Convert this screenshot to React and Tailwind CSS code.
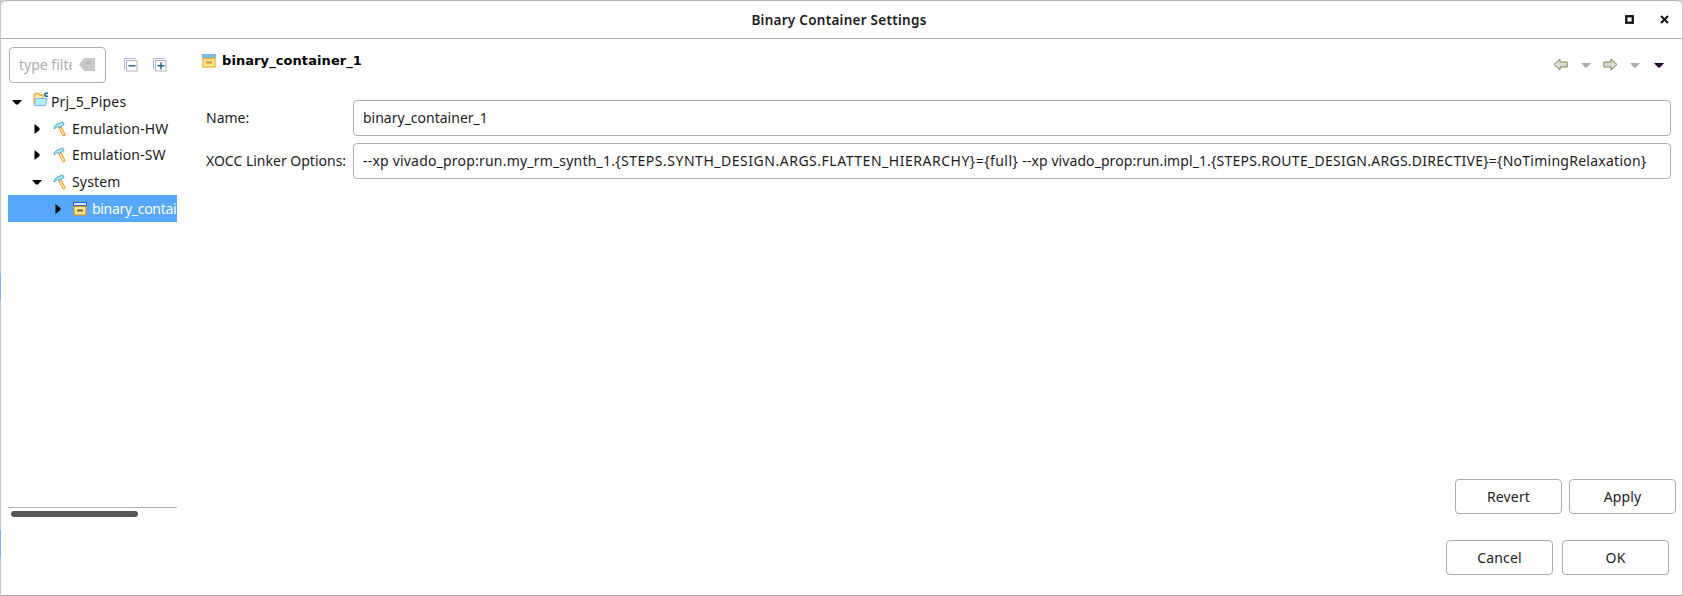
import React from "react";

const Tri = ({ down, color = "#000" }) => (
  <svg width="10" height="10" viewBox="0 0 10 10" className="shrink-0">
    <path d={down ? "M0 3h10L6 7.500H4z" : "M2.500 0v10L7.500 6V4z"} fill={color} />
  </svg>
);

const Hammer = () => (
  <svg width="14" height="16" viewBox="0 0 14 16" className="shrink-0">
    <path d="M7 6.500l3.700 7" stroke="#f0a030" strokeWidth="3.600" strokeLinecap="round" />
    <path d="M7.200 7l3.400 6.400" stroke="#ffe8b0" strokeWidth="1.400" strokeLinecap="round" />
    <path d="M1 8C1.200 4.500 3.500 3 6 2.500L9.500 0.800l1.700 2.700L8 5 7 6.500 4.500 5.500z" fill="#a0f0f8" stroke="#5098c0" strokeWidth="0.9" />
  </svg>
);

const Box = ({ selected }) => (
  <svg width="14" height="14" viewBox="0 0 14 14" className="shrink-0">
    <rect x="0.500" y="0.500" width="13" height="3" fill={selected ? "#dce8ff" : "#70c8e8"} stroke={selected ? "#3058c8" : "#88a8f0"} />
    <rect x="1" y="4.500" width="12" height="8.500" fill="#ffec90" stroke={selected ? "#c89838" : "#f8b030"} strokeWidth="1.300" />
    <rect x="4" y="7.500" width="6" height="2" fill={selected ? "#806020" : "#d88820"} />
  </svg>
);

const Folder = () => (
  <svg width="16" height="15" viewBox="0 0 16 15" className="shrink-0">
    <path d="M1 12.500V3.500l1.500-2h3l1.500 1.500h3V6" fill="#ffeeb0" stroke="#f0a838" strokeWidth="1.300" />
    <path d="M1.500 13.500L2.500 6.500h11.500L12.500 13.500z" fill="#a8f4ff" stroke="#88a8f0" />
    <path d="M15 1.300h-1.700a1.500 1.500 0 0 0 0 3H15" fill="none" stroke="#1860a0" strokeWidth="1.500" />
  </svg>
);

const Expander = ({ plus }) => (
  <svg width="14" height="14" viewBox="0 0 14 14" className="shrink-0">
    <path d="M0.500 11.500V0.500h11" fill="none" stroke="#b0b0f4" />
    <rect x="2.500" y="2.500" width="10.500" height="10.500" fill="#fff" stroke="#b0b4bc" />
    <path d={plus ? "M4.500 7.800h7M8 4.500v7" : "M4.500 7.800h7"} stroke="#206070" strokeWidth="1.400" />
  </svg>
);

const Arrow = ({ right }) => (
  <svg width="15" height="13" viewBox="0 0 15 13" className="shrink-0">
    <path
      d={right ? "M0.800 4h7.200V1l6 5.500-6 5.500V9H0.800z" : "M14.200 4H7V1L1 6.500l6 5.500V9h7.200z"}
      fill="#dcdcd4" stroke="#84844c"
    />
  </svg>
);

const Btn = ({ children }) => (
  <button className="flex h-[35px] w-[107px] items-center justify-center rounded-[4px] border border-[#acacac] text-[14px] tracking-[0.15px]">{children}</button>
);

const Row = ({ pad, down, icon, label, selected }) => (
  <div className={`flex h-[26.600px] items-center overflow-hidden whitespace-nowrap ${pad} ${selected ? "bg-[#56a8ff] tracking-[-0.300px] text-white" : "tracking-[0.150px]"}`}>
    <Tri down={down} />
    {icon}
    <span>{label}</span>
  </div>
);

export default function App() {
  return (
    <div className="flex h-[596px] w-[1683px] bg-[#d8d8d8] font-['Noto_Sans',sans-serif] text-[14px] leading-5 text-[#1c1c1c]">
      <div className="flex w-px shrink-0 flex-col bg-[#c8c8c8] pt-[273px]">
        <div className="h-[27px] bg-[#80b0e8]" />
        <div className="mt-[230px] h-[27px] bg-[#80b0e8]" />
      </div>
      <div className="flex h-full flex-1 flex-col rounded-t-[6px] border-y border-r border-y-[#b0b0b0] border-r-[#c8c8c8] bg-white">
        <header className="flex h-[38px] shrink-0 items-center border-b border-[#acacac] pr-[13px]">
          <div className="w-[95px]" />
          <h1 className="flex-1 text-center text-[13.500px] font-semibold tracking-[0.270px]">Binary Container Settings</h1>
          <div className="flex w-[87px] items-center justify-end gap-[26px]">
            <svg width="9" height="9" viewBox="0 0 9 9"><rect x="1.250" y="1.250" width="6.500" height="6.500" fill="none" stroke="#111" strokeWidth="2.300" /></svg>
            <svg width="9" height="9" viewBox="0 0 9 9"><path d="M1 1l7 7M8 1L1 8" stroke="#111" strokeWidth="2" /></svg>
          </div>
        </header>
        <main className="flex flex-1">
          <aside className="flex w-[177px] shrink-0 flex-col pl-[7px]">
            <div className="flex pt-2 pl-px">
              <div className="flex h-[36px] w-[97px] items-center rounded-[4px] border border-[#acacac] pb-px pl-[9px] text-[#acacac]">
                <span className="w-[53px] overflow-hidden whitespace-nowrap">type filter text</span>
                <svg width="16" height="13" viewBox="0 0 16 13" className="ml-[7px] shrink-0"><path d="M0 6.500L5 0h11v13H5z" fill="#c8c8c8" /><path d="M7 4l2 2M11 3l-2 3" stroke="#aaa" /></svg>
              </div>
              <div className="flex gap-[15px] pt-[11px] pl-[18px]"><Expander /><Expander plus /></div>
            </div>
            <nav className="h-[425px] w-[169px] border-b border-[#b4b4b4] pt-[5.900px]">
              <Row pad="pl-1" down icon={<span className="mr-[2px] ml-[11px] -mt-[5px]"><Folder /></span>} label="Prj_5_Pipes" />
              <Row pad="pl-[24px]" icon={<span className="mr-[5px] ml-[11px]"><Hammer /></span>} label="Emulation-HW" />
              <Row pad="pl-[24px]" icon={<span className="mr-[5px] ml-[11px]"><Hammer /></span>} label="Emulation-SW" />
              <Row pad="pl-[24px]" down icon={<span className="mr-[5px] ml-[11px]"><Hammer /></span>} label="System" />
              <Row pad="pl-[45px]" selected icon={<span className="mr-[5px] ml-[10px]"><Box selected /></span>} label="binary_container_1" />
            </nav>
            <div className="mt-[3px] ml-[3px] h-[6px] w-[127px] rounded-full bg-[#555]" />
          </aside>
          <section className="flex flex-1 flex-col pr-[6px] pl-[24px]">
            <div className="flex h-[61px] justify-between pt-[12px]">
              <h2 className="flex h-5 items-center gap-[6px] font-['DejaVu_Sans',sans-serif] text-[13px] font-bold tracking-[0.080px] text-black"><Box />binary_container_1</h2>
              <div className="flex h-[27px] items-center pr-[12px]">
                <Arrow /><span className="mr-[12px] ml-[13px]"><Tri down color="#acacac" /></span>
                <Arrow right /><span className="mr-[14px] ml-[12px]"><Tri down color="#acacac" /></span><Tri down color="#200030" />
              </div>
            </div>
            <div className="flex flex-col gap-[7px] pr-[5px] pl-[4px]">
              <label className="flex items-center"><span className="w-[147px] whitespace-nowrap">Name:</span><span className="flex h-[36px] flex-1 items-center rounded-[4px] border border-[#acacac] pl-[9px]">binary_container_1</span></label>
              <label className="flex items-center">
                <span className="w-[147px] whitespace-nowrap">XOCC Linker Options:</span>
                <span className="flex h-[36px] flex-1 items-center rounded-[4px] border border-[#acacac] pb-px pl-[9px] whitespace-nowrap">
                  <span>
                    <span className="tracking-[0.200px]">--xp vivado_prop:run.my_rm_synth_1.</span>
                    <span className="tracking-[0.520px]">{"{STEPS.SYNTH_DESIGN.ARGS.FLATTEN_HIERARCHY}"}</span>
                    <span className="tracking-[0.450px]">{"={full} "}</span>
                    <span className="tracking-[0.080px]">--xp vivado_prop:run.impl_1.</span>
                    <span className="tracking-[0.260px]">{"{STEPS.ROUTE_DESIGN.ARGS.DIRECTIVE}={NoTimingRelaxation}"}</span>
                  </span>
                </span>
              </label>
            </div>
            <div className="mt-auto flex justify-end gap-[7px]"><Btn>Revert</Btn><Btn>Apply</Btn></div>
            <div className="mt-[26px] mb-[20px] flex justify-end gap-[9px] pr-[7px]"><Btn>Cancel</Btn><Btn>OK</Btn></div>
          </section>
        </main>
      </div>
    </div>
  );
}
